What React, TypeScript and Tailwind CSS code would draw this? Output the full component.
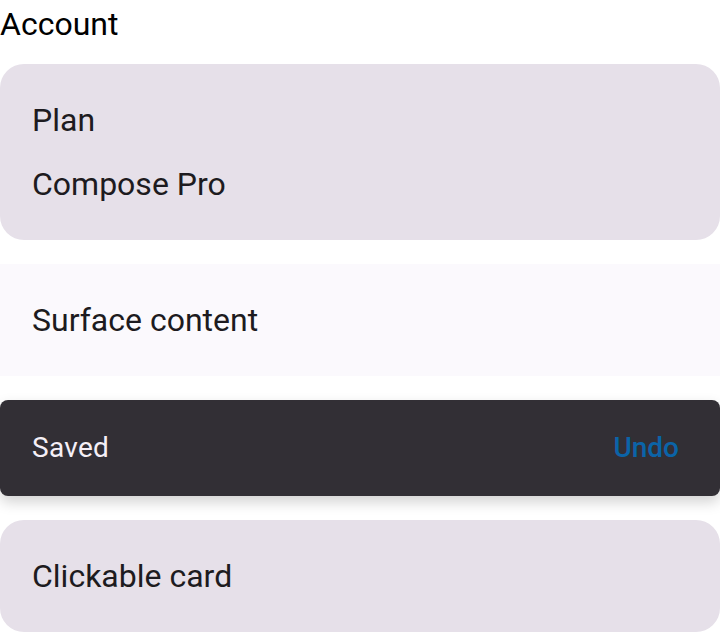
import type { ReactNode } from "react";

const font = { fontFamily: "Roboto, 'Noto Sans', sans-serif" };

// filled card used for the plan and clickable rows
const FilledCard = ({ children }: { children: ReactNode }) => (
  <div className="rounded-[24px] bg-[#e6e0e9] p-8 text-[32px] leading-[48px] text-[#1d1b20]">{children}</div>
);

export default function App() {
  return (
    <div className="w-[720px] bg-white" style={font}>
      <h1 className="text-[32px] leading-[48px] text-black">Account</h1>

      <div className="mt-4 flex flex-col gap-6">
        <FilledCard>
          <p>Plan</p>
          <p className="mt-4">Compose Pro</p>
        </FilledCard>

        <div className="bg-[#fbf9fd] p-8 text-[32px] leading-[48px] text-[#1d1b20]">Surface content</div>

        <div className="flex h-24 items-center justify-between rounded-lg bg-[#322f35] pl-8 pr-[41px] shadow-[0_6px_14px_rgba(0,0,0,0.18)]">
          <span className="text-[28px] leading-10 tracking-[0.3px] text-[#f5eff7]">Saved</span>
          <button className="text-[28px] font-medium leading-10 text-[#0b64a8]">Undo</button>
        </div>

        <FilledCard>Clickable card</FilledCard>
      </div>
    </div>
  );
}
